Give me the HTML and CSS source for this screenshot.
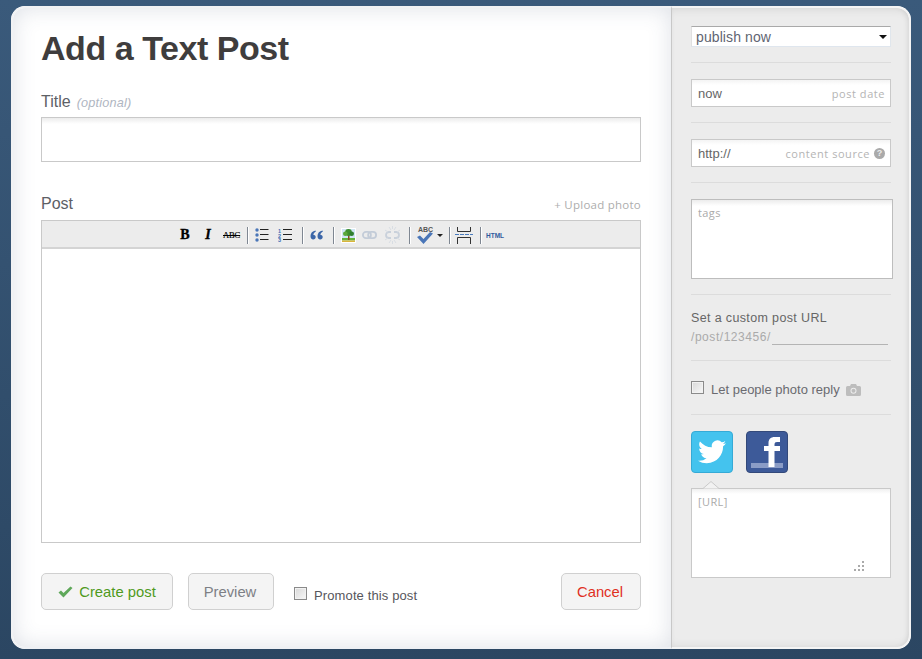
FILE: index.html
```html
<!DOCTYPE html>
<html lang="en">
<head>
<meta charset="utf-8">
<title>Add a Text Post</title>
<link rel="stylesheet" href="styles.css">
</head>
<body>
<div class="card">
  <main class="main">
    <h1 class="heading">Add a Text Post</h1>
    <div class="label-row title-label"><span class="label">Title</span><em class="optional">(optional)</em></div>
    <div class="field title-field"></div>
    <div class="label-row post-label"><span class="label">Post</span><span class="upload">+ Upload photo</span></div>
    <div class="editor">
      <div class="toolbar">
        <span class="tool t-b">B</span>
        <span class="tool t-i">I</span>
        <span class="tool t-abc">ABC</span>
        <span class="sep"></span>
        <svg class="ico" width="14" height="14" viewBox="0 0 14 14"><g fill="#4a76b8"><circle cx="2" cy="2" r="1.700"/><circle cx="2" cy="7" r="1.700"/><circle cx="2" cy="12" r="1.700"/></g><path d="M5 1.500h8.500M5 6.500h8.500M5 11.500h8.500" stroke="#222" stroke-width="1"/></svg>
        <svg class="ico gap9" width="14" height="14" viewBox="0 0 14 14"><g fill="#3f6fb5" font-family="Liberation Sans" font-size="5.500" font-weight="bold"><text x="0" y="4.500">1</text><text x="0" y="9.500">2</text><text x="0" y="14">3</text></g><path d="M5 1.500h9M5 6.500h9M5 11.500h9" stroke="#222" stroke-width="1"/></svg>
        <span class="sep sep-wide"></span>
        <svg class="ico" width="13" height="10" viewBox="0 0 13 10"><path d="M5.500 .5C2.500 1 .5 3 .5 6c0 2 1 3.500 2.700 3.500 1.500 0 2.500-1 2.500-2.400S4.700 4.800 3.300 4.800C3.600 3.500 4.300 2.500 5.800 1.800zM12.500 .5C9.500 1 7.500 3 7.500 6c0 2 1 3.500 2.700 3.500 1.500 0 2.500-1 2.500-2.400s-1-2.300-2.400-2.300c.3-1.300 1-2.300 2.500-3z" fill="#3c66a8"/></svg>
        <span class="sep sep-wide"></span>
        <svg class="ico" width="15" height="15" viewBox="0 0 15 15"><rect width="15" height="15" fill="#fff"/><rect x="1" y="1" width="13" height="9.500" fill="#cfe6f5"/><rect x="1" y="10" width="13" height="2.500" fill="#63b33c"/><rect x="1" y="12.500" width="13" height="1.500" fill="#d9b53c"/><rect x="7" y="6" width="1.500" height="6" fill="#8a4d22"/><circle cx="7.500" cy="4.500" r="3.400" fill="#3f8f2f"/><circle cx="4.300" cy="5.800" r="2.300" fill="#5aa83a"/><circle cx="10.700" cy="5.800" r="2.300" fill="#2f7f2f"/></svg>
        <svg class="ico gap6" width="15" height="8" viewBox="0 0 15 8"><g fill="none" stroke="#c3ccd8" stroke-width="1.800"><rect x=".9" y=".9" width="8" height="6.200" rx="3.100"/><rect x="6.100" y=".9" width="8" height="6.200" rx="3.100"/></g></svg>
        <svg class="ico gap8" width="15" height="18" viewBox="0 0 15 18"><g fill="none" stroke="#c9d1db" stroke-width="1.800"><path d="M6 6H4a3 3 0 0 0 0 6h2M9 6h2a3 3 0 0 1 0 6H9"/></g><path d="M4 1l2 3M11 1L9 4M7.500 0v3M4 17l2-3M11 17l-2-3M7.500 18v-3M0 4l3 2M15 4l-3 2M0 14l3-2M15 14l-3-2" stroke="#d8dde3" stroke-width="1"/></svg>
        <span class="sep sep-mid"></span>
        <span class="spell"><span class="spell-text">ABC</span><svg class="spell-check" width="16" height="12" viewBox="0 0 16 12"><path d="M0 5l3-1.500L6.500 7 13 0l3 1.500L6.500 12z" fill="#4a76b8"/></svg></span>
        <span class="caret"></span>
        <span class="sep sep-spell"></span>
        <svg class="ico" width="18" height="17" viewBox="0 0 18 17"><path d="M2.500 0v4.500h13V0M2.500 17v-6.500h13V17" fill="none" stroke="#333"/><path d="M0 7.500h18" stroke="#4a7bbd" stroke-dasharray="4 1"/></svg>
        <span class="sep sep-end"></span>
        <span class="tool t-html">HTML</span>
      </div>
    </div>
    <div class="actions">
      <button class="btn btn-create" type="button"><svg width="15" height="12" viewBox="0 0 15 12"><path d="M.5 6.500L3 4.500l2.500 2.500L12.500 .5 14.500 2 5.500 11.500z" fill="#5fa85a"/></svg>Create post</button>
      <button class="btn btn-preview" type="button">Preview</button>
      <label class="promote"><span class="check"></span><span class="promote-text">Promote this post</span></label>
      <button class="btn btn-cancel" type="button">Cancel</button>
    </div>
  </main>
  <aside class="side">
    <div class="section s-select"><div class="select">publish now<span class="select-arrow"></span></div></div>
    <div class="section"><div class="input"><span class="value">now</span><span class="hint">post date</span></div></div>
    <div class="section"><div class="input"><span class="value">http://</span><span class="hint">content source<i class="help">?</i></span></div></div>
    <div class="section"><div class="tags">tags</div></div>
    <div class="section s-url">
      <div class="url-title">Set a custom post URL</div>
      <div class="url-row"><span>/post/123456/</span><span class="url-line"></span></div>
    </div>
    <div class="section s-reply">
      <span class="check"></span><span class="reply-text">Let people photo reply</span>
      <svg width="15" height="12" viewBox="0 0 15 12"><path d="M1.500 2H4l1-2h5l1 2h2.500A1.500 1.500 0 0 1 15 3.500v7a1.500 1.500 0 0 1-1.500 1.500h-12A1.500 1.500 0 0 1 0 10.500v-7A1.500 1.500 0 0 1 1.500 2z" fill="#bdbdbd"/><circle cx="7.500" cy="6.800" r="3" fill="#ececec"/><circle cx="7.500" cy="6.800" r="2" fill="#bdbdbd"/></svg>
    </div>
    <div class="social">
      <div class="tile tile-tw"><svg width="28" height="24" viewBox="0 0 24 20"><path d="M24 2.400c-.9.400-1.800.7-2.800.8 1-.6 1.800-1.600 2.200-2.700-1 .6-2 1-3.100 1.200A4.900 4.900 0 0 0 11.900 6C7.800 5.800 4.200 3.800 1.700.9c-.4.700-.7 1.600-.7 2.500 0 1.700.9 3.200 2.200 4.100-.8 0-1.600-.2-2.200-.6v.1c0 2.400 1.700 4.400 3.900 4.800-.4.100-.8.200-1.300.2-.3 0-.6 0-.9-.1.600 2 2.400 3.400 4.600 3.400A9.900 9.900 0 0 1 0 17.400 14 14 0 0 0 7.500 19.600c9.100 0 14-7.500 14-14v-.6c1-.7 1.800-1.600 2.500-2.600z" fill="#fff"/></svg></div>
      <div class="tile tile-fb"><span class="fb-band"></span><svg class="fb-f" width="16" height="30" viewBox="0 0 16 30"><path d="M4.500 30V14H0V9h4.500V6c0-4 2.500-6 6-6H16v5h-3c-1.700 0-2.500.8-2.500 2.500V9H16v5h-5.500v16z" fill="#fff"/></svg></div>
    </div>
    <div class="share">
      <svg class="pointer" width="16" height="8" viewBox="0 0 16 8"><path d="M0 7.500L8 .5l8 7" fill="#f2f2f2" stroke="#c9c9c9"/></svg>
      <span class="share-text">[URL]</span>
      <svg class="grip" width="11" height="11" viewBox="0 0 11 11"><g fill="#aaa"><rect x="8" y="0" width="2" height="2"/><rect x="8" y="4" width="2" height="2"/><rect x="4" y="4" width="2" height="2"/><rect x="8" y="8" width="2" height="2"/><rect x="4" y="8" width="2" height="2"/><rect x="0" y="8" width="2" height="2"/></g></svg>
    </div>
  </aside>
</div>
</body>
</html>
```
FILE: styles.css
```css
* { box-sizing: border-box; }
html, body { margin: 0; height: 659px; overflow: hidden; }
body {
  padding: 6px 11px 10px;
  background: linear-gradient(#3a5a7b, #2b4662);
  font-family: "Liberation Sans", Arial, sans-serif;
  color: #555;
}
.card {
  display: flex;
  height: 643px;
  width: 900px;
  border-radius: 14px;
  overflow: hidden;
  background: #fff;
}
.main {
  width: 661px;
  flex: none;
  padding: 0 30px 0 28px;
  border-right: 1px solid #c8c8c8;
  background: #fff;
  box-shadow: inset 0 0 22px rgba(60, 80, 110, .17);
  display: flex;
  flex-direction: column;
  border-left: 2px solid #f1f2f4;
  border-top: 2px solid #f1f2f4;
  border-bottom: 2px solid #eef0f4;
  border-radius: 14px 0 0 14px;
}
.heading {
  margin: 20px 0 0;
  font-size: 34px;
  line-height: 40px;
  letter-spacing: -.45px;
  color: #3f3d3d;
  font-weight: bold;
}
.label-row { display: flex; width: 600px; }
.title-label { margin-top: 22px; height: 27px; align-items: baseline; }
.post-label { margin-top: 30px; height: 28px; justify-content: space-between; align-items: flex-start; }
.label { font-size: 16px; line-height: 24px; color: #5d6066; }
.optional { margin-left: 6px; font-size: 12.700px; color: #b0b6c2; letter-spacing: .2px; }
.upload { font-family: "Open Sans", sans-serif; font-size: 11.500px; line-height: 26px; color: #adadad; letter-spacing: .25px; }
.field {
  width: 600px;
  height: 45px;
  border: 1px solid #c9c9c9;
  background: linear-gradient(#ececec, #fff 6px);
}
.editor {
  width: 600px;
  height: 323px;
  border: 1px solid #c9c9c9;
  background: #fff;
}
.toolbar {
  height: 28px;
  display: flex;
  align-items: center;
  padding: 2px 0 0 138px;
  background: #ececec;
  border-bottom: 2px solid #d4d4d4;
  color: #111;
}
.tool { display: block; text-align: center; flex: none; }
.t-b { font: bold 14px "Liberation Serif", serif; width: 10px; color: #000; margin-right: 13px; -webkit-text-stroke: .35px #000; }
.t-i { font: italic bold 14px "Liberation Serif", serif; width: 10px; color: #000; margin-right: 10px; -webkit-text-stroke: .35px #000; }
.t-abc { font: 8.500px "Liberation Serif", serif; width: 17px; text-decoration: line-through; letter-spacing: -.1px; color: #000; -webkit-text-stroke: .2px #000; }
.t-html { font: bold 6.500px "Liberation Sans", sans-serif; color: #2f5a9c; width: 18px; }
.sep { width: 1px; height: 17px; background: #7f8792; box-shadow: 1px 0 #fff; margin: 0 7px; flex: none; }
.sep-wide { margin-left: 10px; }
.sep-mid { margin-left: 9px; }
.sep-spell { margin-left: 6px; margin-right: 5px; }
.sep-end { margin-right: 5px; }
.ico { flex: none; display: block; }
.gap9 { margin-left: 9px; }
.gap6 { margin-left: 6px; }
.gap8 { margin-left: 8px; }
.spell { position: relative; width: 16px; height: 17px; display: block; flex: none; }
.spell-text { position: absolute; left: 1px; top: -1px; font: bold 7px "Liberation Sans", sans-serif; color: #555; }
.spell-check { position: absolute; left: 0; bottom: 0; }
.caret { width: 0; height: 0; border: 3px solid transparent; border-top: 3px solid #222; border-bottom: 0; margin-left: 4px; flex: none; }
.actions { display: flex; align-items: flex-start; width: 600px; margin-top: 30px; }
.btn {
  height: 37px;
  border: 1px solid #d0d0d0;
  border-radius: 5px;
  background: #f4f4f4;
  font: 14.800px "Liberation Sans", sans-serif;
  padding: 0;
}
.btn-create { width: 132px; color: #4f9a1c; display: flex; align-items: center; justify-content: center; gap: 6px; }
.btn-preview { width: 86px; margin-left: 15px; padding-right: 2px; color: #7d7f85; }
.btn-cancel { width: 80px; margin-left: auto; padding-right: 2px; color: #e0301e; }
.promote { display: flex; margin-left: 20px; font-size: 13px; line-height: 16px; color: #56565c; letter-spacing: .12px; margin-top: 14px; }
.promote-text { margin-top: 1px; }
.check {
  display: block;
  width: 13px;
  height: 13px;
  flex: none;
  border: 1px solid #8a8a8a;
  background: linear-gradient(135deg, #d8d8d8, #f8f8f8);
  box-shadow: inset 0 0 0 1px #f2f2f2;
}
.promote .check { margin-right: 7px; }
.side {
  flex: 1;
  padding: 18px 0 0 19px;
  background: #ececec;
  box-shadow: inset -4px 0 5px -2px rgba(0,0,0,.06), inset 0 -6px 8px -4px rgba(0,0,0,.06), inset 0 6px 8px -4px rgba(0,0,0,.08);
  border-top: 2px solid #f4f4f4;
  border-right: 2px solid #f4f4f4;
  border-bottom: 2px solid #f4f4f4;
  border-radius: 0 14px 14px 0;
  width: 239px;
  font-size: 13px;
}
.section { width: 200px; padding-bottom: 15px; margin-bottom: 16px; border-bottom: 1px solid #dcdcdc; }
.select {
  height: 21px;
  padding-left: 4px;
  background: #fff;
  border-top: 1px solid #a9a9a9;
  border-left: 1px solid #e0e0e0;
  border-right: 1px solid #e0e6ec;
  border-bottom: 1px solid #dfe6ee;
  font-size: 14px;
  line-height: 21px;
  letter-spacing: .1px;
  color: #5f6572;
  position: relative;
}
.select-arrow {
  position: absolute;
  right: 3px;
  top: 8px;
  border: 4px solid transparent;
  border-top: 4px solid #111;
  border-bottom: 0;
}
.input {
  height: 28px;
  display: flex;
  justify-content: space-between;
  align-items: center;
  padding: 0 5px 0 6px;
  border: 1px solid #c9c9c9;
  background: linear-gradient(#f4f4f4, #fff 5px);
}
.value { font-size: 13px; color: #666; }
.hint { font-family: "Open Sans", sans-serif; font-size: 11px; letter-spacing: .55px; color: #b4b4b4; display: flex; align-items: center; }
.help { display: block; width: 11px; height: 11px; margin-left: 4px; border-radius: 50%; background: #aaa; color: #ececec; font: bold 9px/11px "Liberation Sans", sans-serif; text-align: center; letter-spacing: 0; }
.tags {
  width: 202px;
  height: 80px;
  border: 1px solid #bdbdbd;
  padding: 5px 6px;
  background: linear-gradient(#ececec, #fff 6px);
  font-family: "Open Sans", sans-serif;
  font-size: 11px;
  color: #aaa;
  letter-spacing: .4px;
}
.s-url { padding-bottom: 14px; }
.url-title { font-size: 12.500px; line-height: 16px; letter-spacing: .36px; color: #666; margin-top: -1px; }
.url-row { display: flex; margin-top: 4px; height: 16px; font-size: 12px; line-height: 15px; letter-spacing: .55px; color: #aaa; }
.url-line { width: 116px; height: 15px; border-bottom: 1px solid #b4b4b4; margin-left: 1px; }
.s-reply { display: flex; align-items: flex-start; padding-top: 4px; padding-bottom: 16px; }
.reply-text { margin-left: 7px; font-size: 13px; line-height: 16px; margin-top: 1px; color: #6a6a70; }
.s-reply svg { margin-left: 6px; margin-top: 3px; }
.social { display: flex; gap: 13px; }
.tile { width: 42px; height: 42px; border-radius: 4px; position: relative; overflow: hidden; display: flex; }
.tile-tw { background: #44c3ee; border: 1px solid #35aad6; align-items: center; justify-content: center; }
.tile-fb { background: #3d5a99; border: 1px solid #33497a; }
.fb-band { position: absolute; left: 4px; right: 4px; bottom: 4px; height: 5px; background: #8a9cc6; }
.fb-f { position: absolute; left: 17px; top: 5px; }
.share {
  position: relative;
  width: 200px;
  height: 90px;
  margin-top: 15px;
  border: 1px solid #c9c9c9;
  background: linear-gradient(#f0f0f0, #fff 5px);
  padding: 5px 6px;
}
.share-text { font-family: "Open Sans", sans-serif; font-size: 11px; letter-spacing: .4px; color: #aaa; line-height: 15px; display: block; }
.pointer { position: absolute; left: 11px; top: -8px; display: block; }
.grip { position: absolute; right: 25px; bottom: 5px; }
```
